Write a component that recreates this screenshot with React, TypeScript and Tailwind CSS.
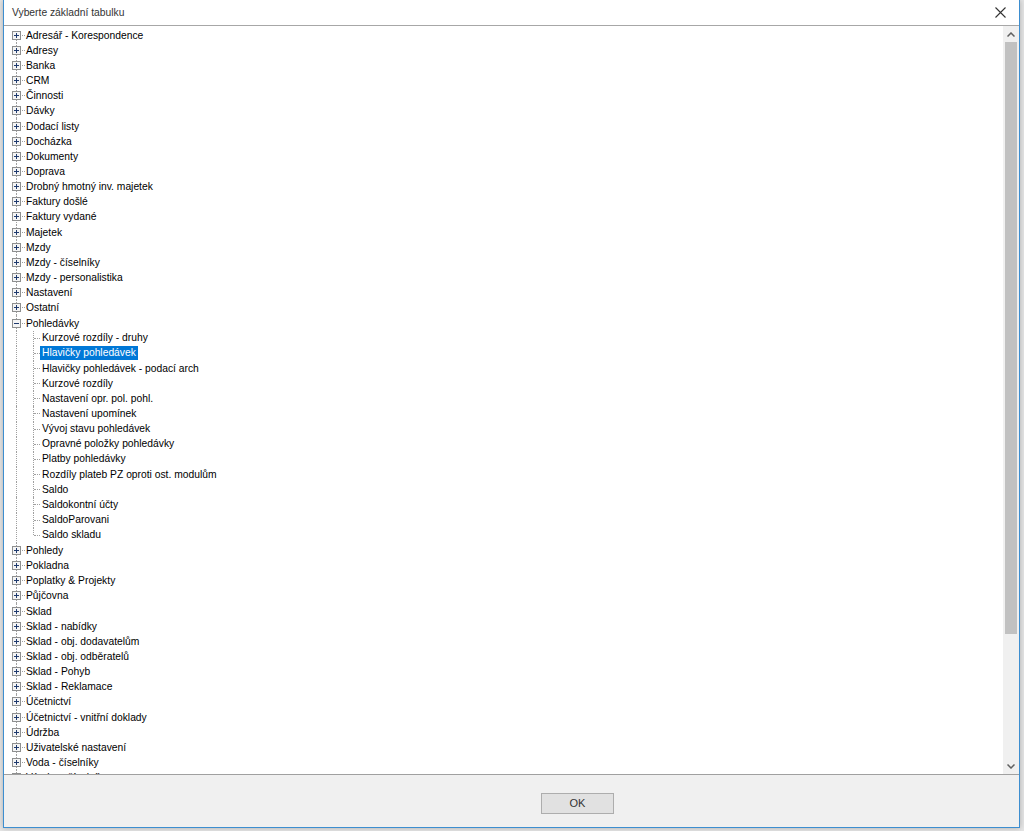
import React from "react";

type Node = { label: string; children?: string[] };

const tree: Node[] = [
  { label: "Adresář - Korespondence" },
  { label: "Adresy" },
  { label: "Banka" },
  { label: "CRM" },
  { label: "Činnosti" },
  { label: "Dávky" },
  { label: "Dodací listy" },
  { label: "Docházka" },
  { label: "Dokumenty" },
  { label: "Doprava" },
  { label: "Drobný hmotný inv. majetek" },
  { label: "Faktury došlé" },
  { label: "Faktury vydané" },
  { label: "Majetek" },
  { label: "Mzdy" },
  { label: "Mzdy - číselníky" },
  { label: "Mzdy - personalistika" },
  { label: "Nastavení" },
  { label: "Ostatní" },
  {
    label: "Pohledávky",
    children: [
      "Kurzové rozdíly - druhy",
      "Hlavičky pohledávek",
      "Hlavičky pohledávek - podací arch",
      "Kurzové rozdíly",
      "Nastavení opr. pol. pohl.",
      "Nastavení upomínek",
      "Vývoj stavu pohledávek",
      "Opravné položky pohledávky",
      "Platby pohledávky",
      "Rozdíly plateb PZ oproti ost. modulům",
      "Saldo",
      "Saldokontní účty",
      "SaldoParovani",
      "Saldo skladu",
    ],
  },
  { label: "Pohledy" },
  { label: "Pokladna" },
  { label: "Poplatky & Projekty" },
  { label: "Půjčovna" },
  { label: "Sklad" },
  { label: "Sklad - nabídky" },
  { label: "Sklad - obj. dodavatelům" },
  { label: "Sklad - obj. odběratelů" },
  { label: "Sklad - Pohyb" },
  { label: "Sklad - Reklamace" },
  { label: "Účetnictví" },
  { label: "Účetnictví - vnitřní doklady" },
  { label: "Údržba" },
  { label: "Uživatelské nastavení" },
  { label: "Voda - číselníky" },
  { label: "Výroba - číselníky" },
];

function Box({ open }: { open: boolean }) {
  return (
    <svg width="9" height="9" viewBox="0 0 9 9" className="block">
      <rect x="0.5" y="0.5" width="8" height="8" fill="#f4f4f4" stroke="#8e8f8f" />
      <line x1="2" y1="4.5" x2="7" y2="4.5" stroke="#1f3a6e" />
      {!open && <line x1="4.5" y1="2" x2="4.5" y2="7" stroke="#1f3a6e" />}
    </svg>
  );
}

function TopRow({ node, first }: { node: Node; first: boolean }) {
  const open = !!node.children;
  return (
    <div className="relative flex h-[15.17px] items-center">
      <div
        className={
          "absolute left-[12px] w-0 border-l border-dotted border-[#a0a0a0] " +
          (first ? "top-1/2 bottom-0" : "top-0 bottom-0")
        }
      />
      <div className="relative ml-[8px] flex h-[9px] w-[9px] items-center">
        <Box open={open} />
      </div>
      <div className="ml-[1px] w-[3px] border-t border-dotted border-[#a0a0a0]" />
      <span className="whitespace-nowrap pl-[1px] leading-[13px] text-black">{node.label}</span>
    </div>
  );
}

function ChildRow({ label, last, selected }: { label: string; last: boolean; selected: boolean }) {
  return (
    <div className="relative flex h-[15.17px] items-center">
      <div className="absolute left-[12px] top-0 bottom-0 w-0 border-l border-dotted border-[#a0a0a0]" />
      <div
        className={
          "absolute left-[29px] top-0 w-0 border-l border-dotted border-[#a0a0a0] " +
          (last ? "h-1/2" : "bottom-0")
        }
      />
      <div className="ml-[30px] w-[6px] border-t border-dotted border-[#a0a0a0]" />
      <span
        className={
          "whitespace-nowrap px-[2px] leading-[14px] " +
          (selected ? "bg-[#0078d7] text-white" : "text-black")
        }
      >
        {label}
      </span>
    </div>
  );
}

export default function App() {
  return (
    <div
      className="h-[831px] w-[1024px] overflow-hidden bg-[#e6e6e6]"
      style={{ fontFamily: '"Liberation Sans", Arial, sans-serif' }}
    >
      <div className="ml-[3px] flex h-[828px] w-[1017px] flex-col border border-t-0 border-[#3d8ed0] bg-white shadow-[0_0_6px_rgba(0,0,0,0.25)]">
        {/* Title bar */}
        <div className="flex h-[26px] shrink-0 items-center justify-between border-b border-[#a7a7a7] bg-white pl-[8px] pr-[13px]">
          <span className="text-[10.3px] text-[#333]">Vyberte základní tabulku</span>
          <svg width="11" height="11" viewBox="0 0 11 11">
            <path d="M0.5 0.5 L10.5 10.5 M10.5 0.5 L0.5 10.5" stroke="#333" strokeWidth="1.1" />
          </svg>
        </div>

        {/* Tree + scrollbar */}
        <div className="flex h-[749px] shrink-0 border-b border-[#a0a0a0]">
          <div className="flex-1 overflow-hidden pt-[1.5px] text-[10.3px]">
            {tree.map((n, i) => (
              <React.Fragment key={n.label}>
                <TopRow node={n} first={i === 0} />
                {n.children?.map((c, j) => (
                  <ChildRow
                    key={c}
                    label={c}
                    last={j === n.children!.length - 1}
                    selected={c === "Hlavičky pohledávek"}
                  />
                ))}
              </React.Fragment>
            ))}
          </div>
          <div className="flex w-[16px] shrink-0 flex-col items-center bg-[#f0f0f0]">
            <div className="flex h-[16px] w-full items-center justify-center">
              <svg width="8" height="5" viewBox="0 0 8 5">
                <path d="M0.5 4.5 L4 1 L7.5 4.5" fill="none" stroke="#606060" strokeWidth="1.5" />
              </svg>
            </div>
            <div className="w-[12px] flex-1 pb-[124px]">
              <div className="h-full w-full bg-[#c1c1c1]" />
            </div>
            <div className="flex h-[16px] w-full items-center justify-center">
              <svg width="8" height="5" viewBox="0 0 8 5">
                <path d="M0.5 0.5 L4 4 L7.5 0.5" fill="none" stroke="#606060" strokeWidth="1.5" />
              </svg>
            </div>
          </div>
        </div>

        {/* Footer */}
        <div className="flex flex-1 items-start justify-start bg-[#f0f0f0] pl-[537px] pt-[18px]">
          <button className="h-[21px] w-[73px] border border-[#adadad] bg-[#e1e1e1] text-[11px] text-[#333]">
            OK
          </button>
        </div>
      </div>
    </div>
  );
}
